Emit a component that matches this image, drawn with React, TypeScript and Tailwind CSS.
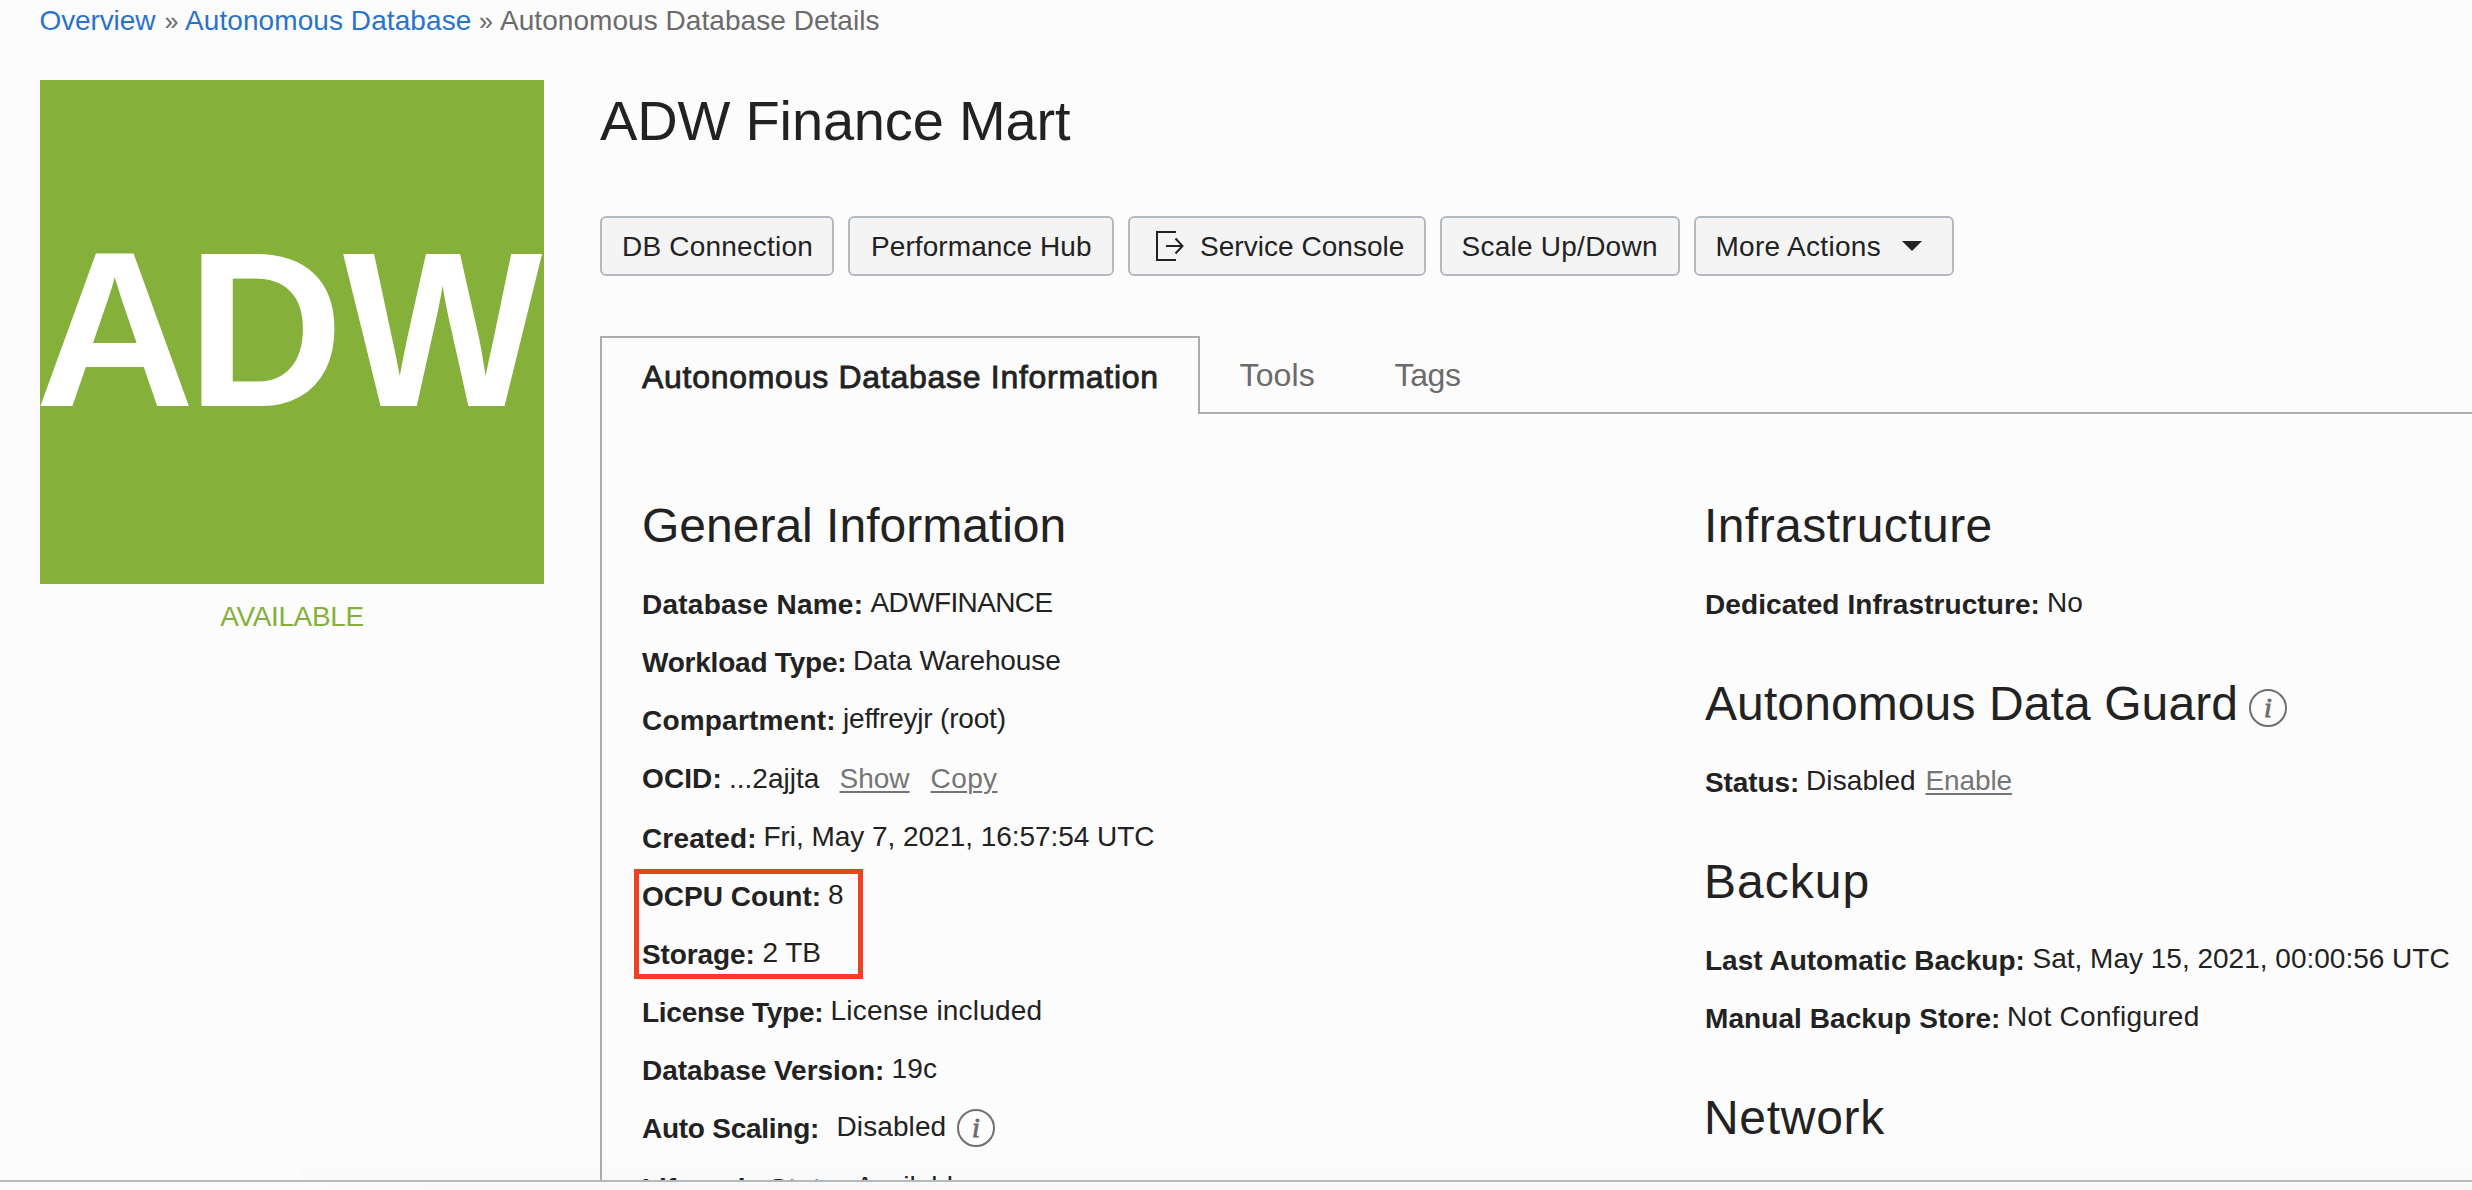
import type { ReactNode } from 'react';

function InfoIcon({ className }: { className: string }) {
  return (
    <span
      className={`flex size-[38px] shrink-0 items-center justify-center rounded-full border-2 border-[#6f6f6f] font-['Liberation_Serif',serif] text-[28px] leading-[34px] tracking-normal text-[#6b6b6b] italic [-webkit-text-stroke:0.9px_#6b6b6b] ${className}`}
    >
      i
    </span>
  );
}

function ExitIcon() {
  return (
    <svg className="mr-6 h-[30px] w-7 shrink-0" viewBox="0 0 28 30" fill="none" stroke="#222" strokeWidth="2">
      <path d="M20 1H1v28h19" />
      <path d="M10 15h16.5M19.5 7.5l7 7.5l-7 7.5" />
    </svg>
  );
}

function Button({ className, children }: { className: string; children: ReactNode }) {
  return (
    <button
      className={`flex h-[60px] items-center rounded-md border-2 border-[#b5bac0] bg-[#f4f4f4] text-left leading-[44px] whitespace-nowrap ${className}`}
    >
      {children}
    </button>
  );
}

function Heading({ className, children }: { className: string; children: ReactNode }) {
  return <h2 className={`flex h-[60px] text-[48px] leading-[62px] whitespace-nowrap ${className}`}>{children}</h2>;
}

type RowProps = { label: string; labelClass: string; valueClass?: string; rowClass?: string; children: ReactNode };

function Row({ label, labelClass, valueClass = 'leading-[56px]', rowClass = 'h-[58px]', children }: RowProps) {
  return (
    <div className={`flex items-start whitespace-nowrap ${rowClass}`}>
      <span className={`shrink-0 leading-[60px] font-bold ${labelClass}`}>{label}</span>
      <span className={`flex items-start ${valueClass}`}>{children}</span>
    </div>
  );
}

const link = 'text-[#757575] underline decoration-2 underline-offset-[3px]';

export default function App() {
  return (
    <div className="h-[1190px] w-[2472px] overflow-hidden bg-[#fcfcfc] font-['Liberation_Sans',Arial,sans-serif] text-[28px] text-[#222]">
      <div className="relative h-[1180px] overflow-hidden">
        <nav className="flex h-10 pl-[39.5px] leading-[42px] whitespace-nowrap text-[#6b6b6b]">
          <a className="w-[125px] tracking-[-0.12px] text-[#2a73cc]">Overview</a>
          <span className="w-[20.5px] text-[25px]">»</span>
          <a className="w-[294px] tracking-[0.08px] text-[#2a73cc]">Autonomous Database</a>
          <span className="w-[21px] text-[25px]">»</span>
          <span className="tracking-[0.05px]">Autonomous Database Details</span>
        </nav>

        <main className="flex pt-10 pl-10">
          <aside className="w-[504px] shrink-0">
            <div className="flex h-[504px] overflow-hidden bg-[#85b03a] text-[221px] leading-[500px] font-bold text-white">
              <span className="-ml-[5px] w-[152px] shrink-0 origin-left">A</span>
              <span className="w-[156px] shrink-0 origin-left scale-x-[0.98]">D</span>
              <span className="w-[210px] shrink-0 origin-left scale-x-[0.955]">W</span>
            </div>
            <div className="mt-0.5 text-center leading-[62px] tracking-[-0.38px] text-[#85b03a]">AVAILABLE</div>
          </aside>

          <section className="ml-14 w-[1872px] shrink-0">
            <h1 className="h-20 text-[56px] leading-[82px] tracking-[-0.16px]">ADW Finance Mart</h1>

            <div className="mt-14 flex gap-[14px]">
              <Button className="w-[234px] pl-5 tracking-[0.2px]">
                <span className="pt-0.5">DB Connection</span>
              </Button>
              <Button className="w-[266px] pl-[21px] tracking-[0.08px]">
                <span className="pt-0.5">Performance Hub</span>
              </Button>
              <Button className="w-[298px] pl-[26px] tracking-[0.04px]">
                <ExitIcon />
                <span className="-ml-[8px] pt-0.5">Service Console</span>
              </Button>
              <Button className="w-[240px] pl-[19.5px] tracking-[0.25px]">
                <span className="pt-0.5">Scale Up/Down</span>
              </Button>
              <Button className="w-[260px] pl-[19.5px] tracking-[0.3px]">
                <span className="w-[186.5px] pt-0.5">More Actions</span>
                <svg className="h-2.5 w-5" viewBox="0 0 20 10">
                  <path d="M0 0h20L10 10z" fill="#222" />
                </svg>
              </Button>
            </div>

            <div className="mt-[60px] flex h-[78px] whitespace-nowrap">
              <div className="w-[600px] shrink-0 border-2 border-b-0 border-[#acacac] pl-10 text-[32px] leading-[78px] tracking-[0.72px] [-webkit-text-stroke:0.8px_#222]">
                Autonomous Database Information
              </div>
              <div className="-ml-0.5 flex flex-1 border-b-2 border-[#acacac] pl-[41.5px] text-[32px] leading-[78px] text-[#6b6b6b]">
                <span className="w-[155px] tracking-[0.15px]">Tools</span>
                <span className="tracking-[-0.36px]">Tags</span>
              </div>
            </div>

            <div className="flex h-[800px] border-l-2 border-[#acacac] pt-[81px] pl-10">
              <div className="w-[1063px] shrink-0">
                <Heading className="mb-5 tracking-[0px]">General Information</Heading>
                <Row label="Database Name:" labelClass="w-[228.5px] tracking-[0.24px]">
                  <span className="tracking-[-0.62px]">ADWFINANCE</span>
                </Row>
                <Row label="Workload Type:" labelClass="w-[211px] tracking-[-0.22px]">
                  <span className="tracking-[-0.1px]">Data Warehouse</span>
                </Row>
                <Row label="Compartment:" labelClass="w-[201px] tracking-[0.2px]">
                  <span className="tracking-[-0.2px]">jeffreyjr (root)</span>
                </Row>
                <Row
                  label="OCID:"
                  labelClass="w-[87px] tracking-[0.1px]"
                  rowClass="h-[60px]"
                  valueClass="leading-[60px]"
                >
                  <span className="w-[110.5px] tracking-[0px]">...2ajjta</span>
                  <a className={`mr-[21px] ${link}`}>Show</a>
                  <a className={`tracking-[0.4px] ${link}`}>Copy</a>
                </Row>
                <Row label="Created:" labelClass="w-[121.5px] tracking-[0.15px]">
                  <span className="tracking-[-0.04px]">Fri, May 7, 2021, 16:57:54 UTC</span>
                </Row>
                <div className="relative">
                  <Row label="OCPU Count:" labelClass="w-[186px] tracking-[0.03px]">
                    8
                  </Row>
                  <Row label="Storage:" labelClass="w-[120.5px] tracking-[-0.1px]">
                    <span className="tracking-[-0.1px]">2 TB</span>
                  </Row>
                  <div className="absolute top-[1.5px] -left-2 h-[110px] w-[228.5px] border-[5px] border-[#ee4023]" />
                </div>
                <Row label="License Type:" labelClass="w-[188.5px] tracking-[-0.26px]">
                  <span className="tracking-[0.2px]">License included</span>
                </Row>
                <Row label="Database Version:" labelClass="w-[249.5px] tracking-[-0.03px]">
                  <span className="tracking-[0.18px]">19c</span>
                </Row>
                <Row label="Auto Scaling:" labelClass="w-[194.5px] tracking-[-0.26px]" rowClass="h-[60px]">
                  <span className="w-[120.5px] tracking-[0.1px]">Disabled</span>
                  <InfoIcon className="mt-2.5" />
                </Row>
                <Row label="Lifecycle State:" labelClass="w-[213.5px] tracking-[-0.1px]">
                  Available
                </Row>
              </div>

              <div className="w-[767px] shrink-0">
                <Heading className="mb-5 -ml-px tracking-[0.42px]">Infrastructure</Heading>
                <Row label="Dedicated Infrastructure:" labelClass="w-[342px] tracking-[0.08px]">
                  <span>No</span>
                </Row>
                <Heading className="mt-10 mb-5 tracking-[0.1px]">
                  <span className="w-[544px]">Autonomous Data Guard</span>
                  <InfoIcon className="mt-4" />
                </Heading>
                <Row label="Status:" labelClass="w-[101px] tracking-[-0.1px]">
                  <span className="w-[119.5px] tracking-[0.1px]">Disabled</span>
                  <a className={`tracking-[-0.12px] ${link}`}>Enable</a>
                </Row>
                <Heading className="mt-10 mb-5 -ml-px tracking-[1px]">Backup</Heading>
                <Row label="Last Automatic Backup:" labelClass="w-[327.5px] tracking-[0.02px]">
                  Sat, May 15, 2021, 00:00:56 UTC
                </Row>
                <Row label="Manual Backup Store:" labelClass="w-[302px] tracking-[0.07px]">
                  <span className="tracking-[0.3px]">Not Configured</span>
                </Row>
                <Heading className="mt-10 -ml-px tracking-[0.7px]">Network</Heading>
              </div>
            </div>
          </section>
        </main>
        <div className="absolute right-0 bottom-0 left-[300px] h-7 bg-gradient-to-b from-transparent to-black/[0.01]" />
      </div>
      <footer className="h-2.5 border-t-2 border-[#b5babe] bg-gradient-to-r from-[#fcfcfc] from-10% to-[#f8f8f8] to-20%" />
    </div>
  );
}
